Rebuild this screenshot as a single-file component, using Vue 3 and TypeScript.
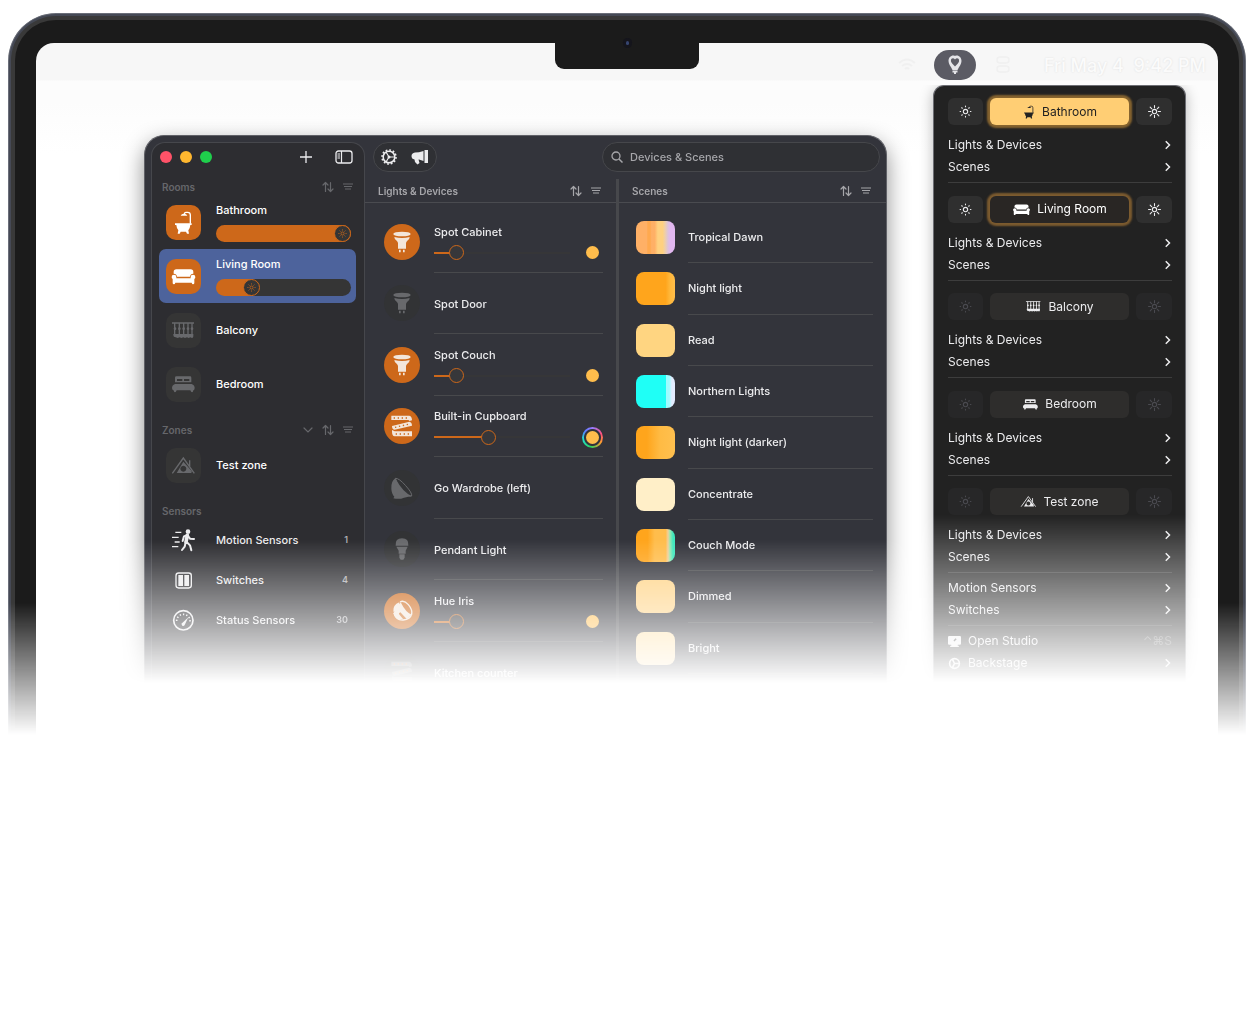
<script setup lang="ts">
import { ref } from 'vue'

interface Room { name: string; icon: string; level: number | null; selected?: boolean }
interface Device { name: string; icon: string; level: number | null; ring?: boolean }
interface Scene { name: string; fill: string }
interface Group { name: string; icon: string; size: number; state: 'on' | 'dim' | 'off' }

const rooms = ref<Room[]>([
  { name: 'Bathroom', icon: 'bath', level: 100 },
  { name: 'Living Room', icon: 'sofa', level: 23, selected: true },
  { name: 'Balcony', icon: 'balcony', level: null },
  { name: 'Bedroom', icon: 'bed', level: null },
])

const sensors = [
  { name: 'Motion Sensors', icon: 'motion', count: 1 },
  { name: 'Switches', icon: 'switch', count: 4 },
  { name: 'Status Sensors', icon: 'gauge', count: 30 },
]

const devices = ref<Device[]>([
  { name: 'Spot Cabinet', icon: 'spot', level: 12 },
  { name: 'Spot Door', icon: 'spot', level: null },
  { name: 'Spot Couch', icon: 'spot', level: 12 },
  { name: 'Built-in Cupboard', icon: 'strip', level: 39, ring: true },
  { name: 'Go Wardrobe (left)', icon: 'bowl', level: null },
  { name: 'Pendant Light', icon: 'bulb', level: null },
  { name: 'Hue Iris', icon: 'iris', level: 12 },
  { name: 'Kitchen counter', icon: 'strip', level: null },
])

const scenes: Scene[] = [
  { name: 'Tropical Dawn', fill: 'linear-gradient(90deg, #ffb066 0 28%, #ffa94f 30% 36%, #ffb066 40% 48%, #ffd180 56% 68%, #f0cfa5 74%, #dcc3dc 82%, #e2b8f0 88%)' },
  { name: 'Night light', fill: 'linear-gradient(90deg, #ffa51c 0 76%, #ffb638 86%, #ffbd4a)' },
  { name: 'Read', fill: '#ffd581' },
  { name: 'Northern Lights', fill: 'linear-gradient(90deg, #1ffff6 0 76%, #9ffcff 77% 85%, #e4ecff 92%)' },
  { name: 'Night light (darker)', fill: 'linear-gradient(90deg, #ffa51c 0 28%, #ffbb44 62%, #ffc04f)' },
  { name: 'Concentrate', fill: '#ffefc8' },
  { name: 'Couch Mode', fill: 'linear-gradient(90deg, #ffa51c 0 30%, #ffbd4c 48% 76%, #f2cf9a 82%, #9de8b0 87%, #3fe8bd 95%)' },
  { name: 'Dimmed', fill: '#ffd385' },
  { name: 'Bright', fill: '#ffdf9f' },
]

const groups: Group[] = [
  { name: 'Bathroom', icon: 'bath', size: 20, state: 'on' },
  { name: 'Living Room', icon: 'sofa', size: 25, state: 'dim' },
  { name: 'Balcony', icon: 'balcony', size: 23, state: 'off' },
  { name: 'Bedroom', icon: 'bed', size: 23, state: 'off' },
  { name: 'Test zone', icon: 'tent', size: 23, state: 'off' },
]

const query = ref('')
</script>

<template>
  <svg class="sprite" aria-hidden="true">
    <symbol id="bath" viewBox="0 0 105 105">
      <path d="M73 56V30q0-8-8-8h-5q-5 0-5 6" fill="none" stroke="currentColor" stroke-width="4" />
      <path d="M44 32q2-6 10-6t10 6zM27 55h50v5h-4q-1 11-6 16l2 10h-6l-3-6H44l-3 6h-6l2-10q-5-5-6-16h-4z" fill="currentColor" />
    </symbol>
    <symbol id="sofa" viewBox="0 0 105 105">
      <path d="M31 31h43q8 0 8 8v5q-9 0-10 9H33q-1-9-10-9v-5q0-8 8-8z" fill="currentColor" />
      <path d="M24 47q7 0 7 7v4h43v-4q0-7 7-7t7 7q0 4-3 6v12q0 4-4 4-3 0-4-5H28q-1 5-4 5-4 0-4-4V60q-3-2-3-6 0-7 7-7z" fill="currentColor" />
    </symbol>
    <symbol id="balcony" viewBox="0 0 105 105">
      <path d="M18 28h66v4H18z M22 63h60v7q0 5-4 5l-5-2-5 2-5-2-6 2-5-2-6 2-5-2-6 2-6-2q-7 0-7-6z" fill="currentColor" />
      <path d="M26 30v34M40 30v34M53 30v34M66 30v34M78 30v34" stroke="currentColor" stroke-width="4" />
      <g fill="currentColor"><circle cx="40" cy="47" r="4" /><circle cx="53" cy="47" r="4" /><circle cx="66" cy="47" r="4" /><circle cx="27" cy="47" r="4" /><circle cx="78" cy="47" r="4" /></g>
    </symbol>
    <symbol id="bed" viewBox="0 0 105 105">
      <path fill-rule="evenodd" d="M31 28h41q4 0 4 4v14H27V32q0-4 4-4zM33 36v6h16v-6zm21 0v6h16v-6z" fill="currentColor" />
      <path d="M27 51h50q9 3 9 12 0 7-5 8v2q0 3-3 3t-5-6H32q-2 6-5 6t-3-3v-2q-6-1-6-8 0-9 9-12z" fill="currentColor" />
    </symbol>
    <symbol id="tent" viewBox="0 0 105 105">
      <path d="M19 76L52 30l33 46M71 55V37" fill="none" stroke="currentColor" stroke-width="4" />
      <path fill-rule="evenodd" d="M52 41l27 30H74l4 4H32l2-3zM52 53a9 9 0 1 0 .1 0z" fill="currentColor" />
    </symbol>
    <symbol id="motion" viewBox="0 0 105 105">
      <circle cx="66" cy="26" r="7" fill="currentColor" />
      <path d="M28 28h18M18 43h20M26 57h15M18 71h19" stroke="currentColor" stroke-width="4" />
      <path d="M50 54l4-14 10-4 8 11 12 1M62 57l10 10 4 15M59 58l-3 13-8 10" fill="none" stroke="currentColor" stroke-width="6" stroke-linecap="round" stroke-linejoin="round" />
      <path d="M64 37l-4 20" stroke="currentColor" stroke-width="11" stroke-linecap="round" />
    </symbol>
    <symbol id="switch" viewBox="0 0 105 105">
      <rect x="30" y="30" width="46" height="45" rx="8" fill="none" stroke="currentColor" stroke-width="4" />
      <path d="M37 36h14v33H37zM55 36h14v33H55z" fill="currentColor" />
    </symbol>
    <symbol id="gauge" viewBox="0 0 105 105">
      <circle cx="52" cy="52" r="29" fill="none" stroke="currentColor" stroke-width="5" />
      <circle cx="52" cy="54" r="20" fill="none" stroke="currentColor" stroke-width="5" stroke-dasharray="4 6 4 6 4 6 4 6 4 6 4 6 4 100" transform="rotate(180 52 54)" />
      <path d="M67 43L56 66q-3 5-7 2t-1-7z" fill="currentColor" />
    </symbol>
    <symbol id="spot" viewBox="0 0 108 108">
      <ellipse cx="54" cy="30" rx="26" ry="7" fill="currentColor" />
      <path d="M31 39q23 6 46 0 0 7-7 11-4 3-4 8v16H42V58q0-5-4-8-7-4-7-11zM45 77h5v8h-5zM57 77h5v8h-5z" fill="currentColor" />
    </symbol>
    <symbol id="strip" viewBox="0 0 108 108">
      <path fill="currentColor" d="M22 23h54q8 2 8 14l-8 2q0-3-4-3H22zM24 54l52-13q8 1 8 12l-52 12q-8 0-8-11zM24 66l8 4h52v15H32q-8-2-8-14z" />
      <path fill="none" stroke="#cd681a" stroke-width="4" stroke-dasharray="4 8" d="M29 30h44M33 58l44-10M35 78h46" />
    </symbol>
    <symbol id="bowl" viewBox="0 0 108 108">
      <path fill="currentColor" d="M34 25q-13 8-12 31 1 16 9 24l-3 5q18 4 32-2l23-5Q57 68 34 25z" />
      <path fill="none" stroke="currentColor" stroke-width="3" d="M34 25q11-1 31 22 20 22 18 31-9 4-28-16T34 25z" />
    </symbol>
    <symbol id="bulb" viewBox="0 0 108 108">
      <path fill="currentColor" d="M35 44q-2-22 19-22t19 22zM37 47h34l-6 12v9H44v-9zM46 70h16v10l-4 6h-8l-4-6z" />
    </symbol>
    <symbol id="iris" viewBox="0 0 108 108">
      <path fill="currentColor" d="M46 28q-20 8-18 28l18-4zM28 61q5 17 21 21l-4-21 4-3 20 21 14-14Q66 60 50 28zM44 62l-3 14 18 4z" />
      <path fill="none" stroke="currentColor" stroke-width="4" d="M48 27q12-7 25 8t10 30M30 60q7 23 28 21t25-18" />
    </symbol>
    <symbol id="sun" viewBox="0 0 24 24">
      <circle cx="12" cy="12" r="4" fill="none" stroke="currentColor" stroke-width="2" />
      <path d="M12 1v4M12 19v4M1 12h4M19 12h4M4 4l3 3M17 17l3 3M4 20l3-3M17 7l3-3" stroke="currentColor" stroke-width="2" stroke-linecap="round" />
    </symbol>
    <symbol id="sun-low" viewBox="0 0 24 24">
      <circle cx="12" cy="12" r="4" fill="none" stroke="currentColor" stroke-width="2" />
      <path d="M12 2v1M12 21v1M2 12h1M21 12h1M5 5l1 1M18 18l1 1M5 19l1-1M18 6l1-1" stroke="currentColor" stroke-width="2" stroke-linecap="round" />
    </symbol>
    <symbol id="sort" viewBox="0 0 12 12">
      <path d="M3.5 10.500V1.500M1 4l2.500-2.500L6 4M8.500 1.500v9M6 8l2.500 2.500L11 8" fill="none" stroke="currentColor" stroke-width="1.200" stroke-linecap="round" stroke-linejoin="round" />
    </symbol>
    <symbol id="filter" viewBox="0 0 12 12">
      <path d="M1 3h10M2 5.500h8M3 8h6" stroke="currentColor" stroke-width="1.200" />
    </symbol>
    <symbol id="chevron" viewBox="0 0 12 12">
      <path d="M4.500 1.500L9 6l-4.500 4.500" fill="none" stroke="currentColor" stroke-width="1.800" />
    </symbol>
    <symbol id="chevron-down" viewBox="0 0 12 12">
      <path d="M2 4l4 4 4-4" fill="none" stroke="currentColor" stroke-width="1.200" stroke-linecap="round" />
    </symbol>
  </svg>

  <div class="laptop">
    <div class="notch"><i class="camera"></i></div>
    <div class="screen">
      <header class="menubar">
        <svg class="bar-icon" viewBox="0 0 18 18" aria-label="Wi-Fi">
          <path d="M1 7q8-7 16 0M4 10q5-4 10 0M7 13q2-2 4 0" fill="none" stroke="currentColor" stroke-width="2" />
        </svg>
        <button class="bar-app" aria-label="Lights">
          <svg width="16" height="20" viewBox="0 0 16 20">
            <path fill-rule="evenodd" fill="#e4e4e8" d="M8 1C11-.5 14.500 2 14.500 6c0 3-2 5-4 9h-5C3.500 11 1.500 9 1.500 6 1.500 2 5-.5 8 1zM8 4.500C6.500 2.500 3.500 3 4 6.500c.5 2 2.500 3 4 5 1.500-2 3.500-3 4-5C12.500 3 9.500 2.500 8 4.500zM5.500 15.500h5v2H9V19H7v-1.500H5.500z" />
          </svg>
        </button>
        <svg class="bar-icon" viewBox="0 0 18 18" aria-label="Control Centre">
          <rect x="3" y="1" width="12" height="6" rx="3" fill="none" stroke="currentColor" stroke-width="1.500" />
          <rect x="3" y="10" width="12" height="6" rx="3" fill="none" stroke="currentColor" stroke-width="1.500" />
        </svg>
        <time class="clock">Fri May 4&nbsp; 9:42 PM</time>
      </header>

      <div class="desktop">
        <div class="window-fade">
          <main class="window">
            <aside class="sidebar">
              <div class="titlebar">
                <i class="light red"></i><i class="light amber"></i><i class="light green"></i>
                <button class="plain add" aria-label="Add">
                  <svg width="12" height="12" viewBox="0 0 12 12"><path d="M6 0v12M0 6h12" stroke="currentColor" stroke-width="1.300" /></svg>
                </button>
                <button class="plain" aria-label="Toggle sidebar">
                  <svg width="18" height="14" viewBox="0 0 18 14"><rect x="1" y="1" width="16" height="12" rx="2.500" fill="none" stroke="currentColor" stroke-width="1.300" /><path d="M6.500 1v12M2.500 4H5M2.500 6H5M2.500 8H5" stroke="currentColor" stroke-width="1.200" /></svg>
                </button>
              </div>

              <h2 class="section">Rooms
                <span class="tools"><button class="plain" aria-label="Sort rooms"><svg class="tool"><use href="#sort" /></svg></button><button class="plain" aria-label="Filter rooms"><svg class="tool"><use href="#filter" /></svg></button></span>
              </h2>
              <div v-for="room in rooms" :key="room.name" class="room" :class="{ selected: room.selected }">
                <span class="tile" :class="{ lit: room.level !== null }"><svg><use :href="'#' + room.icon" /></svg></span>
                <div class="room-body">
                  <span>{{ room.name }}</span>
                  <div v-if="room.level !== null" class="dimmer" :style="{ '--level': room.level }">
                    <input v-model.number="room.level" type="range" min="0" max="100" :aria-label="room.name + ' brightness'" />
                    <svg class="dimmer-sun"><use href="#sun-low" /></svg>
                  </div>
                </div>
              </div>

              <h2 class="section">Zones
                <span class="tools"><button class="plain" aria-label="Collapse zones"><svg class="tool"><use href="#chevron-down" /></svg></button><button class="plain" aria-label="Sort zones"><svg class="tool"><use href="#sort" /></svg></button><button class="plain" aria-label="Filter zones"><svg class="tool"><use href="#filter" /></svg></button></span>
              </h2>
              <div class="room">
                <span class="tile"><svg><use href="#tent" /></svg></span>
                <div class="room-body"><span>Test zone</span></div>
              </div>

              <h2 class="section">Sensors</h2>
              <div class="sensors">
                <div v-for="sensor in sensors" :key="sensor.name" class="sensor">
                  <svg><use :href="'#' + sensor.icon" /></svg>
                  <span>{{ sensor.name }}</span>
                  <span class="count">{{ sensor.count }}</span>
                </div>
              </div>
            </aside>

            <section class="content">
              <div class="toolbar">
                <div class="pill">
                  <button class="plain" aria-label="Settings">
                    <svg width="16" height="16" viewBox="0 0 16 16"><circle cx="8" cy="8" r="5.800" fill="none" stroke="currentColor" stroke-width="1.500" /><circle cx="8" cy="8" r="7" fill="none" stroke="currentColor" stroke-width="1.600" stroke-dasharray="1.800 1.865" /><path d="M8 8h6M8 8L5 3M8 8l-3 5" stroke="currentColor" stroke-width="1.200" /><circle cx="8" cy="8" r="1.500" fill="currentColor" /></svg>
                  </button>
                  <button class="plain" aria-label="Announcements">
                    <svg width="18" height="16" viewBox="0 0 18 16"><path fill="currentColor" d="M12.500 2v10L8 10.500H7.500L8.500 14l-2 1.500L4 13l-.5-2.500Q.5 10 .5 7t3.500-3.500l4-.2zM13.500 1H17v13h-3.500z" /></svg>
                  </button>
                </div>
                <label class="search">
                  <svg width="12" height="12" viewBox="0 0 12 12"><circle cx="5" cy="5" r="4" fill="none" stroke="currentColor" stroke-width="1.300" /><path d="M8 8l3.500 3.500" stroke="currentColor" stroke-width="1.500" /></svg>
                  <input v-model="query" type="text" placeholder="Devices &amp; Scenes" aria-label="Search devices and scenes" />
                </label>
              </div>

              <div class="columns">
                <div class="column devices">
                  <h2 class="column-head">Lights &amp; Devices
                    <span class="tools"><button class="plain" aria-label="Sort devices"><svg class="tool"><use href="#sort" /></svg></button><button class="plain" aria-label="Filter devices"><svg class="tool"><use href="#filter" /></svg></button></span>
                  </h2>
                  <div class="device-list">
                    <div v-for="device in devices" :key="device.name" class="device">
                      <span class="disc" :class="{ lit: device.level !== null }"><svg><use :href="'#' + device.icon" /></svg></span>
                      <div class="device-body" :class="{ dimmable: device.level !== null }">
                        <span>{{ device.name }}</span>
                        <div v-if="device.level !== null" class="device-control" :style="{ '--level': device.level }">
                          <input v-model.number="device.level" type="range" min="0" max="100" :aria-label="device.name + ' brightness'" />
                          <span class="colour" :class="{ ring: device.ring }"><i></i></span>
                        </div>
                      </div>
                    </div>
                  </div>
                </div>
                <div class="divider"></div>
                <div class="column scenes">
                  <h2 class="column-head">Scenes
                    <span class="tools"><button class="plain" aria-label="Sort scenes"><svg class="tool"><use href="#sort" /></svg></button><button class="plain" aria-label="Filter scenes"><svg class="tool"><use href="#filter" /></svg></button></span>
                  </h2>
                  <div class="scene-list">
                    <div v-for="scene in scenes" :key="scene.name" class="scene">
                      <i class="swatch" :style="{ background: scene.fill }"></i>
                      <span class="scene-name">{{ scene.name }}</span>
                    </div>
                  </div>
                </div>
              </div>
            </section>
          </main>
        </div>

        <div class="menu-fade">
          <nav class="menu">
            <div class="groups">
              <div v-for="group in groups" :key="group.name" class="group" :class="group.state">
                <div class="group-row">
                  <button class="step" :aria-label="'Dim ' + group.name"><svg><use href="#sun-low" /></svg></button>
                  <button class="toggle">
                    <svg :style="{ width: group.size + 'px', height: group.size + 'px' }"><use :href="'#' + group.icon" /></svg>
                    {{ group.name }}
                  </button>
                  <button class="step" :aria-label="'Brighten ' + group.name"><svg><use href="#sun" /></svg></button>
                </div>
                <button class="item">Lights &amp; Devices<svg class="go"><use href="#chevron" /></svg></button>
                <button class="item">Scenes<svg class="go"><use href="#chevron" /></svg></button>
              </div>
            </div>
            <div class="block">
              <button class="item">Motion Sensors<svg class="go"><use href="#chevron" /></svg></button>
              <button class="item">Switches<svg class="go"><use href="#chevron" /></svg></button>
            </div>
            <div class="block">
              <button class="item">
                <svg class="lead" viewBox="0 0 12 12"><path fill-rule="evenodd" fill="currentColor" d="M1 1h10q1 0 1 1v6q0 1-1 1H9v1h1v1H2v-1h1V9H1Q0 9 0 8V2q0-1 1-1zm5 5l2-2-1-1-2 2z" /></svg>
                Open Studio<span class="keys">⌃⌘S</span>
              </button>
              <button class="item">
                <svg class="lead" viewBox="0 0 12 12"><circle cx="6" cy="6" r="4.500" fill="none" stroke="currentColor" stroke-width="1.500" /><path d="M6 6h4M6 6L4 2M6 6l-2 4" stroke="currentColor" stroke-width="1.500" /></svg>
                Backstage<svg class="go"><use href="#chevron" /></svg>
              </button>
            </div>
          </nav>
        </div>
      </div>
    </div>
  </div>
</template>

<style>
body {
  background: #fff;
}
</style>

<style scoped>
* {
  box-sizing: border-box;
}

.sprite {
  display: none;
}

button,
input {
  font: inherit;
  color: inherit;
  margin: 0;
  padding: 0;
}

button {
  border: 0;
  background: none;
  cursor: pointer;
}

.plain {
  display: flex;
}

h2 {
  margin: 0;
}

.laptop {
  position: relative;
  margin: 13px 10px 0 8px;
  padding: 30px 28px 0;
  font: 500 11px/14px Inter, "Liberation Sans", sans-serif;
  color: #ececee;
}

.laptop::before {
  content: "";
  position: absolute;
  inset: 0 0 auto;
  height: 722px;
  border-radius: 48px 48px 0 0;
  background: #1b1b1b;
  box-shadow: inset 0 0 0 1px #6a6e79, inset 0 0 0 3px #454955, inset 0 0 0 7px #393939;
  mask-image: linear-gradient(#000 590px, transparent 722px);
}

.notch {
  position: absolute;
  z-index: 1;
  top: 28px;
  left: calc(50% - 72px);
  width: 144px;
  height: 28px;
  border-radius: 0 0 9px 9px;
  background: #1b1b1b;
}

.camera {
  display: block;
  width: 3px;
  height: 4px;
  margin: 0 auto;
  border-radius: 2px;
  background: #36456f;
  box-shadow: 0 0 0 3px #15151c;
}

.screen {
  position: relative;
  min-height: 700px;
  border-radius: 18px 18px 0 0;
  background: linear-gradient(#f7f7f7 37px, #fcfcfc 38px 60px, #fff 110px);
}

.menubar {
  display: flex;
  align-items: center;
  justify-content: flex-end;
  height: 42px;
  padding: 2px 12px 0 0;
  color: #f0f0f0;
}

.bar-icon {
  width: 18px;
  height: 18px;
}

.bar-app {
  display: flex;
  align-items: center;
  justify-content: center;
  width: 42px;
  height: 30px;
  margin: 0 18px;
  border-radius: 15px;
  background: #5b5b64;
}

.clock {
  padding-top: 2px;
  margin-left: 32px;
  color: #fbfbfb;
  font-size: 18px;
  line-height: 24px;
  text-shadow: 0 0 2px #ddd;
}

.desktop {
  display: flex;
  align-items: flex-start;
}

.window-fade {
  flex: 1;
  min-width: 0;
  margin: 34px 0 0 82px;
  padding: 16px 30px 0 26px;
  mask-image: linear-gradient(#000 421px, transparent 564px);
}

.window {
  display: flex;
  padding: 6px 0 0 6px;
  border: 1px solid #606167;
  border-bottom: 0;
  border-radius: 20px 20px 0 0;
  background: #33343b;
  box-shadow: 0 8px 22px rgb(0 0 0 / 45%);
}

.sidebar {
  flex: 0 0 214px;
  padding: 0 8px 0 7px;
  border: 1px solid #46474c;
  border-bottom: 0;
  border-radius: 14px 14px 0 0;
  background: #2d2d31;
}

.titlebar {
  display: flex;
  align-items: center;
  gap: 8px;
  height: 25px;
  padding: 2px 3px 0 1px;
}

.light {
  width: 12px;
  height: 12px;
  border-radius: 50%;
}

.red { background: #ff5268; }
.amber { background: #ffb72f; }
.green { background: #1fcf4c; }

.add {
  margin: 0 15px 0 auto;
}

.section {
  display: flex;
  align-items: center;
  height: 16px;
  margin: 11px 2px 0 3px;
  font-size: 10px;
  line-height: 16px;
  font-weight: 600;
  color: #66676b;
}

.tools {
  display: flex;
  gap: 8px;
  margin-left: auto;
}

.tool {
  width: 12px;
  height: 12px;
}

.room {
  display: flex;
  align-items: center;
  gap: 15px;
  height: 54px;
  padding: 0 5px 0 7px;
  border-radius: 7px;
}

.selected {
  background: #4d639c;
}

.tile {
  flex: none;
  width: 35px;
  height: 35px;
  border-radius: 10px;
  background: #353535;
  color: #68696c;
}

.tile svg,
.disc svg {
  display: block;
  width: 100%;
  height: 100%;
}

.tile.lit {
  background: #cd681a;
  color: #fff;
}

.room-body {
  display: flex;
  flex: 1;
  flex-direction: column;
  gap: 8px;
  color: #fff;
}

.dimmer {
  position: relative;
  height: 17px;
}

.dimmer input {
  display: block;
  appearance: none;
  width: 100%;
  height: 17px;
  border-radius: 9px;
  background: linear-gradient(90deg, #cd681a calc(var(--level) * 1% + 6px), #353535 0);
}

.dimmer input::-webkit-slider-thumb {
  appearance: none;
  width: 17px;
  height: 17px;
  border: 1px solid #cd681a;
  border-radius: 50%;
  background: #353535;
}

.dimmer-sun {
  position: absolute;
  top: 4px;
  left: calc((100% - 17px) * var(--level) / 100 + 4px);
  width: 9px;
  height: 9px;
  color: #cd681a;
  pointer-events: none;
}

.sensors {
  padding-top: 1px;
}

.sensor {
  display: flex;
  align-items: center;
  gap: 15px;
  height: 40px;
  padding: 0 8px 0 7px;
}

.sensor svg {
  width: 35px;
  height: 35px;
}

.count {
  margin-left: auto;
  font-size: 9px;
  font-weight: 600;
  color: #b0b0b4;
}

.content {
  flex: 1;
  min-width: 0;
}

.toolbar {
  display: flex;
  justify-content: space-between;
  height: 37px;
  padding: 0 6px 0 8px;
}

.pill,
.search {
  display: flex;
  align-items: center;
  height: 30px;
  border: 1px solid #46474b;
  border-radius: 15px;
  background: #2f3034;
}

.pill {
  gap: 14px;
  padding: 0 7px;
}

.search {
  flex: 0 0 278px;
  gap: 7px;
  padding: 0 8px;
  color: #a6a6aa;
}

.search input {
  flex: 1;
  min-width: 0;
  border: 0;
  outline: 0;
  background: none;
}

.search input::placeholder {
  color: #a6a6aa;
  opacity: 1;
}

.columns {
  display: flex;
}

.column {
  min-width: 0;
}

.devices {
  flex: 0 0 251px;
}

.scenes {
  flex: 1;
}

.divider {
  flex: 0 0 3px;
  background: #47484c;
}

.column-head {
  display: flex;
  align-items: center;
  height: 24px;
  padding: 0 14px 0 13px;
  border-bottom: 1px solid #4a4b50;
  font-size: 10px;
  line-height: 14px;
  font-weight: 600;
  color: #a6a6aa;
}

.device-list {
  display: grid;
  grid-auto-rows: 1fr;
  height: 500px;
  padding: 8px 13px 0 19px;
}

.device {
  display: flex;
  align-items: center;
  gap: 14px;
}

.disc {
  flex: none;
  width: 36px;
  height: 36px;
  border-radius: 50%;
  background: #323335;
  color: #68696c;
}

.disc.lit {
  background: #cd681a;
  color: #f3e6da;
}

.device-body {
  display: flex;
  flex: 1;
  flex-direction: column;
  justify-content: center;
  gap: 4px;
  align-self: stretch;
  padding-top: 2px;
  border-bottom: 1px solid #48494c;
}

.dimmable {
  padding-top: 5px;
}

.device-control {
  display: flex;
  align-items: center;
  justify-content: space-between;
  height: 20px;
}

.device-control input {
  appearance: none;
  width: 136px;
  height: 16px;
  background: linear-gradient(90deg, #cd681a calc(var(--level) * 1%), #363638 0) center / 100% 2px no-repeat;
}

.device-control input::-webkit-slider-thumb {
  appearance: none;
  width: 15px;
  height: 15px;
  border: 1px solid #cd681a;
  border-radius: 50%;
  background: #37373a;
}

.colour {
  display: flex;
  width: 21px;
  height: 21px;
  padding: 4px;
  border-radius: 50%;
}

.colour i {
  flex: 1;
  border-radius: 50%;
  background: #ffbd4c;
}

.ring {
  background:
    radial-gradient(circle, #33343b 8px, transparent 9px),
    conic-gradient(#9b7bff, #ff4f7b 70deg, #ff9d2f 120deg, #2fd35a 190deg, #1fe0d0 260deg, #5b7bff 310deg, #9b7bff);
}

.scene-list {
  display: grid;
  grid-auto-rows: 1fr;
  height: 471px;
  padding: 9px 13px 0 17px;
}

.scene {
  display: flex;
  align-items: center;
  gap: 13px;
}

.swatch {
  flex: none;
  width: 39px;
  height: 33px;
  border-radius: 8px;
}

.scene-name {
  display: flex;
  flex: 1;
  align-items: center;
  align-self: stretch;
  border-bottom: 1px solid #48494c;
}

.menu-fade {
  flex: 0 0 285px;
  margin-right: 16px;
  padding: 0 16px;
  mask-image: linear-gradient(#000 430px, transparent 597px);
}

.menu {
  padding: 12px 13px 24px 14px;
  border: 1px solid #6d6e74;
  border-bottom: 0;
  border-radius: 11px 11px 0 0;
  background: #222;
  box-shadow: 0 3px 14px rgb(0 0 0 / 28%);
  font-size: 12px;
  font-weight: 400;
}

.groups {
  display: grid;
  grid-auto-rows: 1fr;
  height: 488px;
  margin-bottom: -13px;
}

.group-row {
  display: flex;
  gap: 7px;
  height: 27px;
  margin-bottom: 9px;
}

.group::after {
  content: "";
  display: block;
  margin-top: 4px;
  border-top: 1px solid #3d3d3d;
}

.step,
.toggle {
  display: flex;
  align-items: center;
  justify-content: center;
  border-radius: 6px;
}

.step {
  flex: 0 0 35px;
  background: #2f2f2f;
}

.toggle + .step {
  flex-basis: 36px;
}

.step svg {
  width: 13px;
  height: 13px;
}

.off .step {
  background: #272728;
  color: #4a4a50;
}

.toggle {
  flex: 1;
  gap: 3px;
  padding-right: 3px;
  background: #2e2d2c;
}

.on .toggle {
  background: #ffce74;
  color: #222;
  box-shadow: 0 0 2px 3px #86642f;
}

.dim .toggle {
  background: #292624;
  color: #fff;
  box-shadow: 0 0 2px 3px #7c5b2f;
}

.item {
  display: flex;
  align-items: center;
  width: 100%;
  height: 22px;
  text-align: left;
}

.go {
  width: 10px;
  height: 10px;
  margin-left: auto;
}

.block {
  padding: 4px 0;
  position: relative;
}

.block + .block {
  border-top: 1px solid rgb(255 255 255 / 12%);
}

.lead {
  width: 13px;
  height: 13px;
  margin-right: 7px;
}

.keys {
  margin-left: auto;
  color: #666;
}
</style>
